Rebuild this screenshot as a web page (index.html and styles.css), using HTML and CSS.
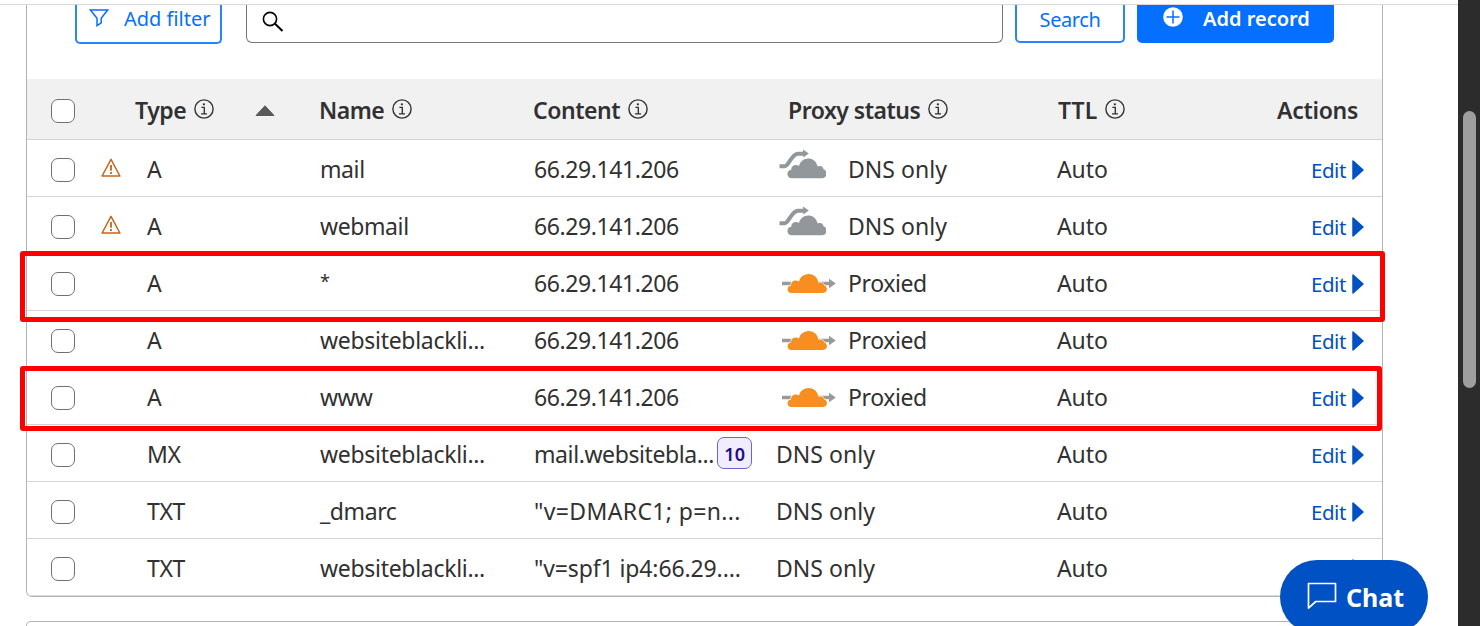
FILE: index.html
```html
<!DOCTYPE html>
<html lang="en">
<head>
<meta charset="utf-8">
<title>DNS records</title>
<link rel="stylesheet" href="styles.css">
<script src="records.js" defer></script>
</head>
<body>
<svg class="defs" width="0" height="0">
  <symbol id="info" viewBox="0 0 20 20"><circle cx="10" cy="10" r="9.1" fill="none" stroke="currentColor" stroke-width="1.4"/><circle cx="9.9" cy="5.3" r="1.15" fill="currentColor"/><path d="M7.4 8.4h2.9v6.4M7 14.9h6" fill="none" stroke="currentColor" stroke-width="1.35"/></symbol>
  <symbol id="warn" viewBox="0 0 20 19"><path d="M10 1.4 18.9 18H1.1Z" fill="none" stroke="currentColor" stroke-width="1.5" stroke-linejoin="round"/><path d="M10 7v5.800M10 14v2" stroke="currentColor" stroke-width="1.800"/></symbol>
  <symbol id="direct" viewBox="0 0 48 30"><path d="M1.5 17.2h5.2c4.2 0 6.500-12.500 13.500-12.500h7" fill="none" stroke="#92979b" stroke-width="3.9"/><path d="M25 0.500 30.800 4.500 25.300 8.500Z" fill="#92979b"/><path d="M12.500 29.200c-5 0-6.200-7.400-.4-8.400-.6-4 4.200-6.400 7.700-3.900 2.100-9.400 16-10.800 18.700.6 3.800-1.200 5.300.4 5.800 2.800 4.100 1 4.400 8.900-1.300 8.900Z" transform="translate(1.200 0)" fill="#92979b"/></symbol>
  <symbol id="proxied" viewBox="0 0 56 22"><path d="M1 10.500h47" stroke="#999" stroke-width="3.700"/><path d="M48 5.800 54.800 10.500 48 15.200Z" fill="#999"/><path d="M10.500 20c-5 0-5.300-7-.5-7.500-.4-4.700 4.500-6.500 8-3.900 2-9.700 17.300-11 19.500 1.200 4-1 5.300 1 5.900 2.700 4 1.300 3.100 7.500-1.400 7.500Z" fill="#f98e20" stroke="#fff" stroke-width="1.200" paint-order="stroke"/></symbol>
</svg>
<div class="window">
  <main class="page">
    <section class="card">
      <div class="toolbar">
        <button class="btn filter"><svg width="20" height="20" viewBox="0 0 20 20"><path d="M1.400 2h17.200l-6.400 8.200v4.600l-4.200 2.800v-7.400Z" fill="none" stroke="currentColor" stroke-width="1.500"/></svg><span>Add filter</span></button>
        <div class="field"><svg width="22" height="22" viewBox="0 0 22 22"><circle cx="8" cy="8" r="6.600" fill="none" stroke="#000" stroke-width="1.600"/><path d="m12.800 12.600 7.700 7.300" stroke="#000" stroke-width="2"/></svg></div>
        <button class="btn search"><span>Search</span></button>
        <button class="btn add"><svg width="20" height="20" viewBox="0 0 20 20"><circle cx="10" cy="10" r="9.800" fill="#fff"/><path d="M3.500 10h13M10 3.500v13" stroke="#056fff" stroke-width="1.500"/></svg><span>Add record</span></button>
      </div>
      <div class="head">
        <i class="check"></i>
        <div class="th"><span class="h-type">Type</span><svg class="info"><use href="#info"/></svg><svg class="sort" viewBox="0 0 20 12"><path d="M10 .8 19 10.500H1Z" fill="#595959" stroke="#595959" stroke-width="1" stroke-linejoin="round"/></svg></div>
        <div class="th"><span class="h-name">Name</span><svg class="info"><use href="#info"/></svg></div>
        <div class="th"><span class="h-content">Content</span><svg class="info"><use href="#info"/></svg></div>
        <div class="th"><span class="h-proxy">Proxy status</span><svg class="info"><use href="#info"/></svg></div>
        <div class="th"><span class="h-ttl">TTL</span><svg class="info"><use href="#info"/></svg></div>
        <div class="th"><span class="h-actions">Actions</span></div>
      </div>
      <div class="rows" id="rows"></div>
    </section>
    <section class="next-card"></section>
  </main>
  <aside class="scrollbar"><div class="thumb"></div></aside>
</div>
<div class="mark mark-wildcard"></div>
<div class="mark mark-www"></div>
<div class="chat"><svg width="30" height="28" viewBox="0 0 30 28"><path d="M1.500 1.500h27v18H8.800l-7.300 6.600Z" fill="none" stroke="#fff" stroke-width="1.700" stroke-linejoin="round"/></svg><span>Chat</span></div>
</body>
</html>
```
FILE: styles.css
```css
* { box-sizing: border-box; }
body { margin: 0; height: 626px; overflow: hidden; background: #fff; color: #313131; font-family: "Noto Sans", "Open Sans", sans-serif; font-size: 23px; line-height: 32px; }
.defs { position: absolute; }
svg { flex: none; display: block; }
span { white-space: nowrap; }
.window { display: flex; height: 626px; }
.page { width: 1458px; border-top: 1px solid #d9d9d9; margin-top: 4px; padding: 0 75px 0 26px; }
.scrollbar { width: 22px; background: #2c2c2c; padding: 111px 4px 0 5px; }
.thumb { height: 277px; border-radius: 7px; background: #9e9e9e; }
.card { border: 1px solid #b3b3b3; border-top: 0; border-radius: 0 0 6px 6px; height: 592px; }
.next-card { margin-top: 24px; height: 5px; border: 1px solid #b3b3b3; border-bottom: 0; border-radius: 6px 6px 0 0; }
.toolbar { display: flex; align-items: flex-start; height: 74px; padding-left: 48px; }
.btn { display: flex; font: inherit; font-size: 20px; line-height: 28px; height: 38px; padding: 0; background: #fff; color: #056fff; border: 2px solid #2a84ff; border-top: 0; border-radius: 0 0 5px 5px; }
.filter { width: 147px; height: 39px; padding-left: 12px; margin-right: 24px; gap: 15px; }
.filter svg { margin-top: 3px; }
.field { width: 757px; height: 38px; border: 1px solid #777; border-top: 0; border-radius: 0 0 6px 6px; margin-right: 12px; padding: 6px 0 0 15px; }
.search { width: 110px; justify-content: center; margin-right: 12px; padding-top: 1px; }
.search span { letter-spacing: -.4px; }
.add { width: 197px; border: 0; background: #056fff; color: #fff; font-weight: 600; padding-left: 26px; gap: 20px; }
.add svg { margin-top: 2px; }
.add span { letter-spacing: 0; }
.head { display: grid; grid-template-columns: 84px 184px 214px 255px 270px 219px 1fr; height: 61px; padding: 3px 0 0 24px; background: #f1f1f1; border-bottom: 1px solid #d5d5d5; font-weight: 600; align-items: center; }
.th { display: flex; align-items: center; }
.th span { margin-top: -2px; }
.info { width: 20px; height: 20px; margin: -3px 0 0 8px; }
.sort { width: 20px; height: 12px; margin-left: 41px; }
.h-type { width: 51px; letter-spacing: -.5px; }
.h-name { width: 65px; letter-spacing: -.5px; }
.h-content { width: 87px; letter-spacing: -.45px; }
.h-proxy { width: 132px; letter-spacing: -.5px; }
.h-ttl { width: 39px; }
.h-actions { letter-spacing: -.3px; }
.check { display: block; width: 24px; height: 24px; border: 1px solid #707070; border-radius: 7px; background: #fff; }
.row { display: grid; grid-template-columns: 50px 46px 173px 214px 242px 281px 254px 1fr; height: 57px; padding: 2px 0 0 24px; border-bottom: 1px solid #d5d5d5; align-items: center; }
.row .check { margin-top: 2px; }
.row:last-child { border-color: #dcdcdc; }
.warn { width: 20px; height: 19px; margin-top: -3px; color: #c5651b; }
.content { display: flex; align-items: center; }
.badge { width: 35px; height: 32px; margin-left: 3px; margin-top: -3px; border: 1px solid #7262d8; border-radius: 7px; background: #f1edfc; color: #200c84; font-size: 18px; font-weight: 600; line-height: 32px; text-align: center; }
.proxy { display: flex; align-items: center; height: 32px; }
.direct { width: 48px; height: 30px; margin: -10px 22px 0 2px; }
.proxied { width: 56px; height: 22px; margin: 1px 11px 0 5px; }
.edit { display: flex; align-items: center; color: #0051c3; font-size: 20.5px; gap: 6px; padding-top: 2px; }
.edit span { width: 35px; letter-spacing: -.45px; margin-top: -1px; }
.edit svg { width: 12px; height: 20px; }
.mark { position: absolute; left: 20px; border: 5px solid #f00; border-radius: 3px; }
.mark-wildcard { top: 251px; width: 1365px; height: 71px; }
.mark-www { top: 366px; width: 1362px; height: 65px; }
.chat { position: absolute; left: 1280px; top: 560px; width: 148px; height: 74px; border-radius: 37px; background: #0051c3; color: #fff; font-weight: 700; font-size: 25px; display: flex; align-items: center; padding-left: 27px; gap: 9px; }
.chat svg { margin-top: -3px; }
.wildcard { display: block; font-size: 18px; line-height: 24px; margin-top: -4px; }
```
FILE: records.js
```js
// type, name, content, status, badge, warning
const records = [
  ["A", "mail", "66.29.141.206", "direct", "", true],
  ["A", "webmail", "66.29.141.206", "direct", "", true],
  ["A", "*", "66.29.141.206", "proxied"],
  ["A", "websiteblackli...", "66.29.141.206", "proxied"],
  ["A", "www", "66.29.141.206", "proxied"],
  ["MX", "websiteblackli...", "mail.websitebla...", "", "10"],
  ["TXT", "_dmarc", "\"v=DMARC1; p=n...", ""],
  ["TXT", "websiteblackli...", "\"v=spf1 ip4:66.29....", ""],
];

// letter spacing in pixels, for texts that differ from the default
const spacing = {
  "DNS only": 0.05,
  "Auto": -0.1,
  "www": -0.7,
  "websiteblackli...": -0.3,
  "\"v=DMARC1; p=n...": 0.36,
  "\"v=spf1 ip4:66.29....": -0.12,
};

const text = (value) => `<span ${value === "*" ? 'class="wildcard" ' : ""}style="letter-spacing:${spacing[value] ?? -0.4}px">${value}</span>`;

document.getElementById("rows").innerHTML = records.map(([type, name, content, status, badge, warning]) => `
  <div class="row">
    <i class="check"></i>
    <div>${warning ? '<svg class="warn"><use href="#warn"/></svg>' : ""}</div>
    <div>${text(type)}</div>
    <div>${text(name)}</div>
    <div class="content">${text(content)}${badge ? `<b class="badge">${badge}</b>` : ""}</div>
    <div class="proxy">${status ? `<svg class="${status}"><use href="#${status}"/></svg>` : ""}${text(status === "proxied" ? "Proxied" : "DNS only")}</div>
    <div>${text("Auto")}</div>
    <div class="edit"><span>Edit</span><svg viewBox="0 0 12 20"><path d="M1 1v18L11 10Z" fill="#0051c3" stroke="#0051c3" stroke-width="1.500" stroke-linejoin="round"/></svg></div>
  </div>`).join("");
```
